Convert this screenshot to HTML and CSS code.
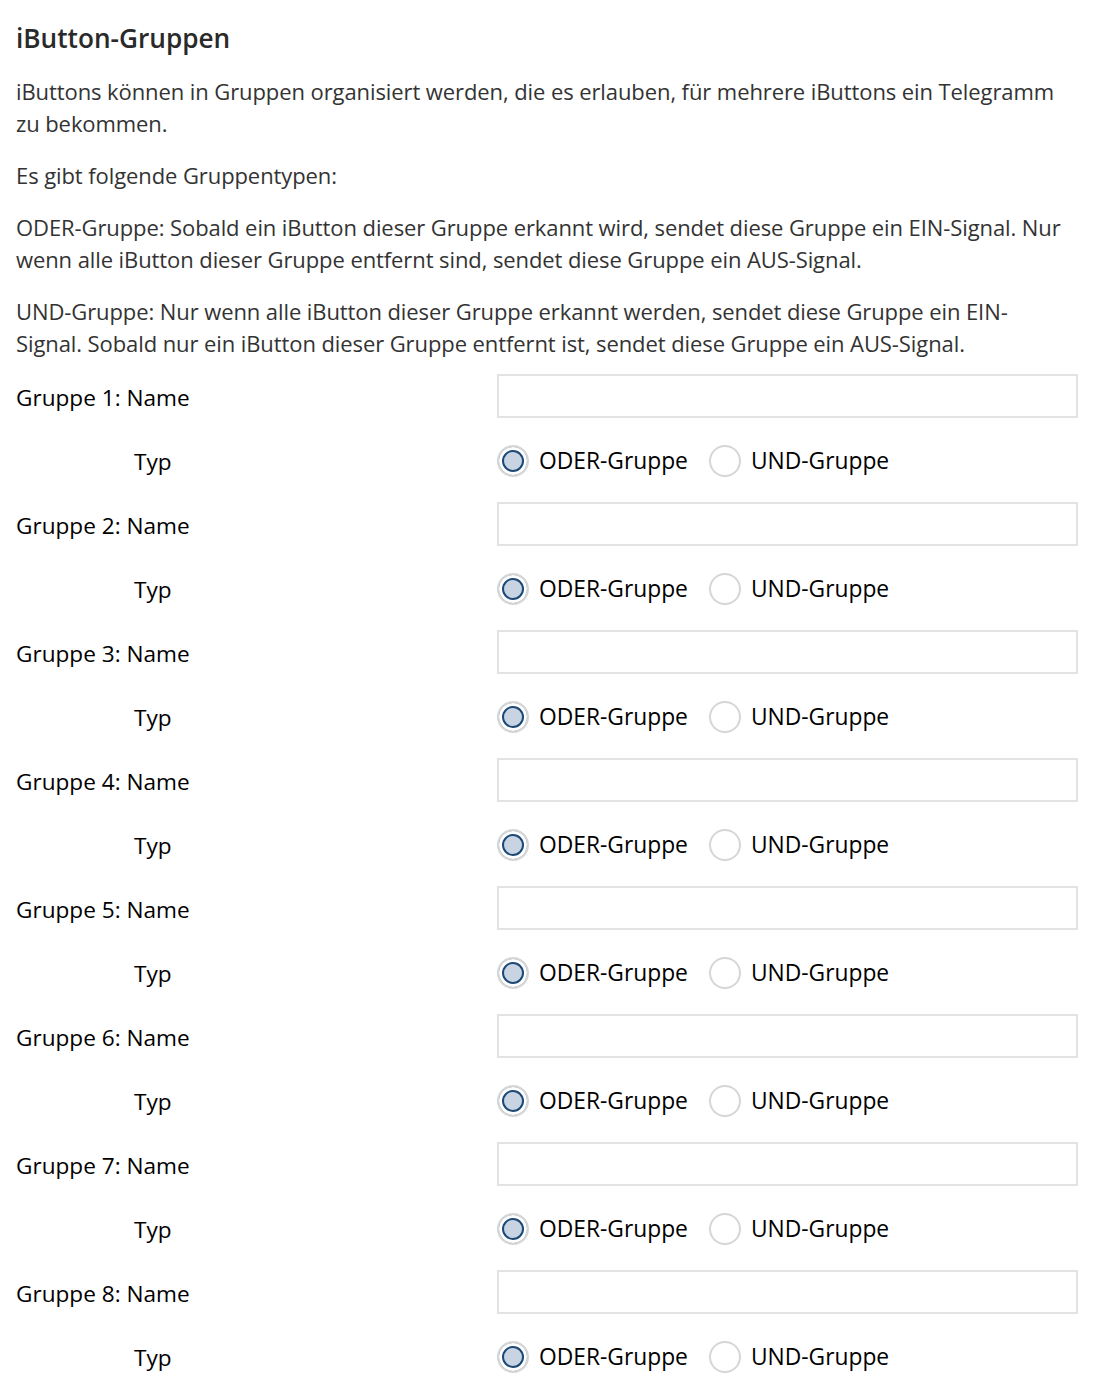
FILE: index.html
```html
<!DOCTYPE html>
<html lang="de"><head><meta charset="utf-8"><title>iButton-Gruppen</title><link rel="stylesheet" href="styles.css"></head>
<body>
<main class="page">
<h2 class="title">iButton-Gruppen</h2>
<p class="text">iButtons können in Gruppen organisiert werden, die es erlauben, für mehrere iButtons ein Telegramm<br>zu bekommen.</p>
<p class="text">Es gibt folgende Gruppentypen:</p>
<p class="text">ODER-Gruppe: Sobald ein iButton dieser Gruppe erkannt wird, sendet diese Gruppe ein EIN-Signal. Nur<br>wenn alle iButton dieser Gruppe entfernt sind, sendet diese Gruppe ein AUS-Signal.</p>
<p class="text">UND-Gruppe: Nur wenn alle iButton dieser Gruppe erkannt werden, sendet diese Gruppe ein EIN-<br>Signal. Sobald nur ein iButton dieser Gruppe entfernt ist, sendet diese Gruppe ein AUS-Signal.</p>
<form class="form">
  <label class="lbl" for="g1">Gruppe 1: Name</label><div class="ctl"><input class="field" id="g1" type="text"></div>
  <span class="lbl sub">Typ</span><div class="ctl radios"><label class="opt"><input class="radio" type="radio" name="t1" checked>ODER-Gruppe</label><label class="opt"><input class="radio" type="radio" name="t1">UND-Gruppe</label></div>
  <label class="lbl" for="g2">Gruppe 2: Name</label><div class="ctl"><input class="field" id="g2" type="text"></div>
  <span class="lbl sub">Typ</span><div class="ctl radios"><label class="opt"><input class="radio" type="radio" name="t2" checked>ODER-Gruppe</label><label class="opt"><input class="radio" type="radio" name="t2">UND-Gruppe</label></div>
  <label class="lbl" for="g3">Gruppe 3: Name</label><div class="ctl"><input class="field" id="g3" type="text"></div>
  <span class="lbl sub">Typ</span><div class="ctl radios"><label class="opt"><input class="radio" type="radio" name="t3" checked>ODER-Gruppe</label><label class="opt"><input class="radio" type="radio" name="t3">UND-Gruppe</label></div>
  <label class="lbl" for="g4">Gruppe 4: Name</label><div class="ctl"><input class="field" id="g4" type="text"></div>
  <span class="lbl sub">Typ</span><div class="ctl radios"><label class="opt"><input class="radio" type="radio" name="t4" checked>ODER-Gruppe</label><label class="opt"><input class="radio" type="radio" name="t4">UND-Gruppe</label></div>
  <label class="lbl" for="g5">Gruppe 5: Name</label><div class="ctl"><input class="field" id="g5" type="text"></div>
  <span class="lbl sub">Typ</span><div class="ctl radios"><label class="opt"><input class="radio" type="radio" name="t5" checked>ODER-Gruppe</label><label class="opt"><input class="radio" type="radio" name="t5">UND-Gruppe</label></div>
  <label class="lbl" for="g6">Gruppe 6: Name</label><div class="ctl"><input class="field" id="g6" type="text"></div>
  <span class="lbl sub">Typ</span><div class="ctl radios"><label class="opt"><input class="radio" type="radio" name="t6" checked>ODER-Gruppe</label><label class="opt"><input class="radio" type="radio" name="t6">UND-Gruppe</label></div>
  <label class="lbl" for="g7">Gruppe 7: Name</label><div class="ctl"><input class="field" id="g7" type="text"></div>
  <span class="lbl sub">Typ</span><div class="ctl radios"><label class="opt"><input class="radio" type="radio" name="t7" checked>ODER-Gruppe</label><label class="opt"><input class="radio" type="radio" name="t7">UND-Gruppe</label></div>
  <label class="lbl" for="g8">Gruppe 8: Name</label><div class="ctl"><input class="field" id="g8" type="text"></div>
  <span class="lbl sub">Typ</span><div class="ctl radios"><label class="opt"><input class="radio" type="radio" name="t8" checked>ODER-Gruppe</label><label class="opt"><input class="radio" type="radio" name="t8">UND-Gruppe</label></div>
</form>
</main>
</body></html>
```
FILE: styles.css
```css
html,body{margin:0;padding:0;background:#fff;}
body{font-family:"Open Sans","Noto Sans",sans-serif;}
.page{padding:0 16px;}
.title{margin:22px 0 21px;font-size:26.2px;line-height:32px;font-weight:600;color:#2a2a2a;}
.text{margin:0 0 20px;font-size:22px;letter-spacing:-0.09px;line-height:32px;color:#333;white-space:nowrap;}
.text:last-of-type{margin-bottom:5px;}
.form{display:grid;grid-template-columns:481px 581px;grid-auto-rows:64px;align-items:center;}
.lbl{font-size:22.6px;line-height:32px;color:#000;padding-top:3px;}
.sub{padding-left:118px;}
.ctl{display:flex;align-items:center;}
.field{box-sizing:border-box;width:100%;height:44px;margin:0;border:2px solid #e3e3e3;background:#fff;font:inherit;font-size:20px;padding:0 10px;outline:none;}
.radios{gap:21px;padding-top:2px;}
.opt{display:flex;align-items:center;gap:10px;font-size:22.8px;line-height:32px;color:#000;}
.radio{appearance:none;-webkit-appearance:none;box-sizing:border-box;width:32px;height:32px;margin:0;border:2px solid #d6d6d6;border-radius:50%;background:#fff;}
.radio:checked{background:#c8d4e1;box-shadow:inset 0 0 0 3px #fff,inset 0 0 0 5px #1d4a78;}
```
